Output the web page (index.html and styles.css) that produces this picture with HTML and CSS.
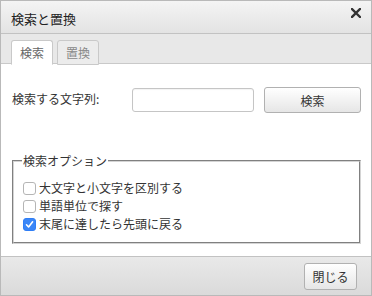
FILE: index.html
```html
<!DOCTYPE html>
<html lang="ja">
<head>
	<meta charset="UTF-8">
	<title>検索と置換</title>
	<link rel="stylesheet" href="styles.css">
</head>
<body>
	<!-- ダイアログ -->
	<div class="dialog">
		<!-- タイトル -->
		<div class="head">
			<h1 class="tit">検索と置換</h1>
			<button class="close" type="button" aria-label="閉じる">
				<svg width="10" height="10" viewBox="0 0 10 10"><path d="M1 1L9 9M9 1L1 9" stroke="#333" stroke-width="2.4" stroke-linecap="square"/></svg>
			</button>
		</div>

		<!-- タブ -->
		<ul class="tabs">
			<li class="on">検索</li>
			<li>置換</li>
		</ul>

		<!-- 本文 -->
		<div class="body">
			<div class="row">
				<label class="lbl" for="find">検索する文字列:</label>
				<input class="txt" id="find" type="text">
				<button class="btn find" type="button">検索</button>
			</div>

			<fieldset class="opts">
				<legend>検索オプション</legend>
				<label class="chk"><span class="box"></span>大文字と小文字を区別する</label>
				<label class="chk"><span class="box"></span>単語単位で探す</label>
				<label class="chk"><span class="box on"><svg width="9" height="9" viewBox="0 0 9 9"><path d="M1.5 4.8L3.6 7L7.6 1.8" fill="none" stroke="#fff" stroke-width="1.6" stroke-linecap="round" stroke-linejoin="round"/></svg></span>末尾に達したら先頭に戻る</label>
			</fieldset>
		</div>

		<!-- フッター -->
		<div class="foot">
			<button class="btn" type="button">閉じる</button>
		</div>
	</div>
</body>
</html>
```

FILE: styles.css
```css
html,body,ul,h1{
	margin: 0;
	padding: 0;
}
ul{
	list-style: none;
}
body{
	font-family: "Noto Sans CJK JP", "Liberation Sans", sans-serif;
	font-size: 12px;
	color: #333;
	background: #fff;
}

/* ダイアログ */
.dialog{
	display: flex;
	flex-direction: column;
	width: 372px;
	height: 296px;
	box-sizing: border-box;
	border: 1px solid #b9b9b9;
	background: #fff;
}

/* タイトル */
.head{
	display: flex;
	align-items: center;
	justify-content: space-between;
	height: 32px;
	padding: 0 10px 0 10px;
	border-bottom: 1px solid #c2c2c2;
	background: linear-gradient(#f4f4f4, #e3e3e3);
}
.tit{
	font-size: 13px;
	font-weight: normal;
	line-height: 1;
	padding-top: 2px;
	color: #222;
}
.close{
	display: flex;
	padding: 0;
	margin-top: -8px;
	border: 0;
	background: none;
}

/* タブ */
.tabs{
	display: flex;
	gap: 4px;
	height: 30px;
	box-sizing: border-box;
	padding: 6px 0 0 10px;
	border-bottom: 1px solid #c9c9c9;
	background: #e8e8e8;
}
.tabs li{
	height: 25px;
	box-sizing: border-box;
	padding: 0 8px;
	line-height: 23px;
	border: 1px solid #c9c9c9;
	border-radius: 3px 3px 0 0;
	background: #ececec;
	color: #888;
}
.tabs li.on{
	border-bottom-color: #fff;
	background: #fff;
	color: #666;
}

/* 本文 */
.body{
	flex: 1;
	padding: 22px 10px 0 11px;
}
.row{
	display: flex;
	align-items: center;
}
.lbl{
	width: 122px;
	padding-bottom: 2px;
}
.txt{
	width: 122px;
	height: 24px;
	box-sizing: border-box;
	margin: 0 10px 0 0;
	border: 1px solid #c5c5c5;
	border-radius: 3px;
	box-shadow: inset 0 1px 1px rgba(0,0,0,.05);
}
.btn{
	height: 27px;
	padding: 0 12px;
	font-family: inherit;
	font-size: 12px;
	color: #333;
	border: 1px solid #b1b1b1;
	border-radius: 3px;
	background: linear-gradient(#fff, #e6e6e6);
}
.find{
	width: 98px;
	height: 26px;
	margin-top: 1px;
}

/* オプション */
.opts{
	margin: 39px 0 0 0;
	padding: 9px 8px 9px 9px;
	border: 2px groove #d4d4d4;
}
.opts legend{
	padding: 0 1px;
	line-height: 18px;
	margin-left: -1px;
}
.chk{
	display: flex;
	align-items: center;
	gap: 3px;
	height: 18px;
	line-height: 18px;
}
.box{
	display: flex;
	align-items: center;
	justify-content: center;
	width: 13px;
	height: 13px;
	box-sizing: border-box;
	border: 1px solid #b5b5b5;
	border-radius: 3px;
	background: #fff;
}
.box.on{
	border-color: #2f7ef6;
	background: #3a86f7;
}

/* フッター */
.foot{
	display: flex;
	align-items: center;
	justify-content: flex-end;
	height: 38px;
	padding-right: 14px;
	border-top: 1px solid #c2c2c2;
	background: linear-gradient(#e9e9e9, #dadada);
}
.foot .btn{
	width: 53px;
	padding: 0;
}
```
